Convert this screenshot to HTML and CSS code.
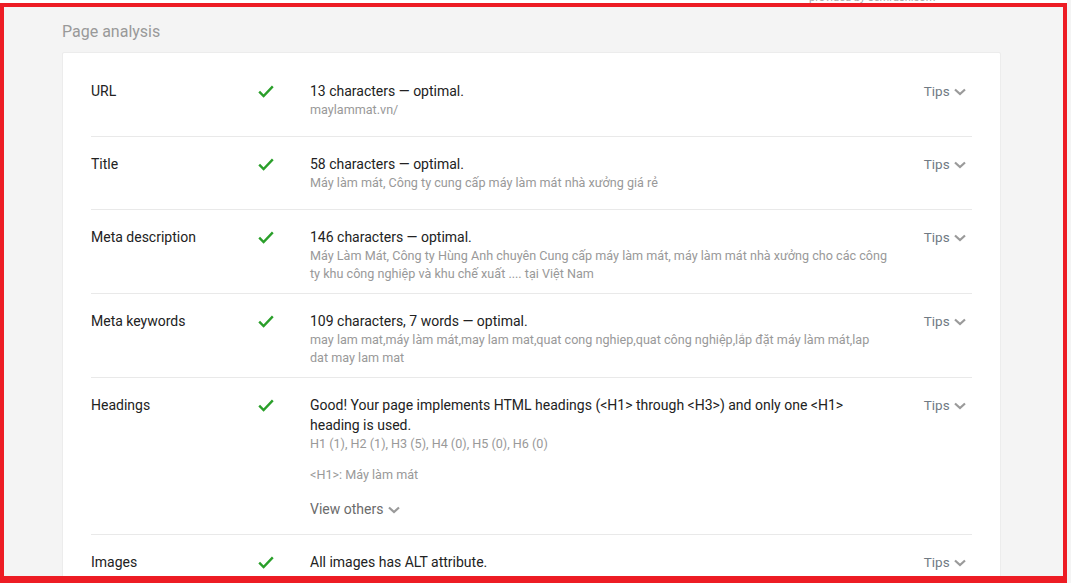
FILE: index.html
```html
<!DOCTYPE html>
<html lang="en">
<head>
<meta charset="utf-8">
<title>Page analysis</title>
<link rel="stylesheet" href="styles.css">
</head>
<body>
<div class="topstrip"><span class="provided">provided by semrush.com</span></div>
<div class="frame">
  <h2 class="section-title">Page analysis</h2>
  <div class="card">
    <div class="row">
      <div class="label">URL</div>
      <div class="check"><svg width="16" height="13" viewBox="0 0 16 13"><path d="M1.2 6.6 L5.6 11 L14.8 1.4" fill="none" stroke="#2a9f2a" stroke-width="2.4"/></svg></div>
      <div class="content">
        <div class="main">13 characters — optimal.</div>
        <div class="sub">maylammat.vn/</div>
      </div>
      <div class="tips">Tips <svg class="chev" width="12" height="8" viewBox="0 0 12 8"><path d="M1 1.5 L6 6 L11 1.5" fill="none" stroke="#9a9a9a" stroke-width="2.2"/></svg></div>
    </div>
    <div class="row">
      <div class="label">Title</div>
      <div class="check"><svg width="16" height="13" viewBox="0 0 16 13"><path d="M1.2 6.6 L5.6 11 L14.8 1.4" fill="none" stroke="#2a9f2a" stroke-width="2.4"/></svg></div>
      <div class="content">
        <div class="main">58 characters — optimal.</div>
        <div class="sub">Máy làm mát, Công ty cung cấp máy làm mát nhà xưởng giá rẻ</div>
      </div>
      <div class="tips">Tips <svg class="chev" width="12" height="8" viewBox="0 0 12 8"><path d="M1 1.5 L6 6 L11 1.5" fill="none" stroke="#9a9a9a" stroke-width="2.2"/></svg></div>
    </div>
    <div class="row">
      <div class="label">Meta description</div>
      <div class="check"><svg width="16" height="13" viewBox="0 0 16 13"><path d="M1.2 6.6 L5.6 11 L14.8 1.4" fill="none" stroke="#2a9f2a" stroke-width="2.4"/></svg></div>
      <div class="content">
        <div class="main">146 characters — optimal.</div>
        <div class="sub">Máy Làm Mát, Công ty Hùng Anh chuyên Cung cấp máy làm mát, máy làm mát nhà xưởng cho các công ty khu công nghiệp và khu chế xuất .... tại Việt Nam</div>
      </div>
      <div class="tips">Tips <svg class="chev" width="12" height="8" viewBox="0 0 12 8"><path d="M1 1.5 L6 6 L11 1.5" fill="none" stroke="#9a9a9a" stroke-width="2.2"/></svg></div>
    </div>
    <div class="row">
      <div class="label">Meta keywords</div>
      <div class="check"><svg width="16" height="13" viewBox="0 0 16 13"><path d="M1.2 6.6 L5.6 11 L14.8 1.4" fill="none" stroke="#2a9f2a" stroke-width="2.4"/></svg></div>
      <div class="content">
        <div class="main">109 characters, 7 words — optimal.</div>
        <div class="sub">may lam mat,máy làm mát,may lam mat,quat cong nghiep,quat công nghiệp,lắp đặt máy làm mát,lap dat may lam mat</div>
      </div>
      <div class="tips">Tips <svg class="chev" width="12" height="8" viewBox="0 0 12 8"><path d="M1 1.5 L6 6 L11 1.5" fill="none" stroke="#9a9a9a" stroke-width="2.2"/></svg></div>
    </div>
    <div class="row">
      <div class="label">Headings</div>
      <div class="check"><svg width="16" height="13" viewBox="0 0 16 13"><path d="M1.2 6.6 L5.6 11 L14.8 1.4" fill="none" stroke="#2a9f2a" stroke-width="2.4"/></svg></div>
      <div class="content">
        <div class="main">Good! Your page implements HTML headings (&lt;H1&gt; through &lt;H3&gt;) and only one &lt;H1&gt; heading is used.</div>
        <div class="sub">H1 (1), H2 (1), H3 (5), H4 (0), H5 (0), H6 (0)</div>
        <div class="sub h1line">&lt;H1&gt;: Máy làm mát</div>
        <div class="more">View others <svg class="chev" width="12" height="8" viewBox="0 0 12 8"><path d="M1 1.5 L6 6 L11 1.5" fill="none" stroke="#9a9a9a" stroke-width="2.2"/></svg></div>
      </div>
      <div class="tips">Tips <svg class="chev" width="12" height="8" viewBox="0 0 12 8"><path d="M1 1.5 L6 6 L11 1.5" fill="none" stroke="#9a9a9a" stroke-width="2.2"/></svg></div>
    </div>
    <div class="row last">
      <div class="label">Images</div>
      <div class="check"><svg width="16" height="13" viewBox="0 0 16 13"><path d="M1.2 6.6 L5.6 11 L14.8 1.4" fill="none" stroke="#2a9f2a" stroke-width="2.4"/></svg></div>
      <div class="content">
        <div class="main">All images has ALT attribute.</div>
      </div>
      <div class="tips">Tips <svg class="chev" width="12" height="8" viewBox="0 0 12 8"><path d="M1 1.5 L6 6 L11 1.5" fill="none" stroke="#9a9a9a" stroke-width="2.2"/></svg></div>
    </div>
  </div>
</div>
</body>
</html>
```

FILE: styles.css
```css
* { box-sizing: border-box; }
html, body {
  margin: 0;
  padding: 0;
  background: #f4f4f4;
  font-family: Roboto, "Liberation Sans", Arial, sans-serif;
  color: #222;
}
.topstrip {
  height: 3px;
  overflow: hidden;
  background: #fff;
  width: 1067px;
  position: relative;
}
.provided {
  position: absolute;
  left: 809px;
  top: -8px;
  font-size: 11px;
  line-height: 11px;
  color: #aaa;
}
.frame {
  width: 1067px;
  height: 580px;
  border: 4px solid #ed1c24;
  border-bottom-width: 7px;
  overflow: hidden;
  padding: 0 0 0 58px;
}
.section-title {
  margin: 0;
  padding-top: 15px;
  height: 45px;
  font-size: 16px;
  line-height: 20px;
  font-weight: 400;
  color: #999;
}
.card {
  width: 939px;
  background: #fff;
  border: 1px solid #ececec;
  border-radius: 2px;
  padding: 11px 28px 0 28px;
}
.row {
  display: grid;
  grid-template-columns: 167px 52px 578px 1fr;
  border-bottom: 1px solid #e9e9e9;
  padding: 17px 0 10px;
  min-height: 73px;
}
.label {
  font-size: 14px;
  line-height: 20px;
  color: #222;
}
.check {
  height: 20px;
  display: flex;
  align-items: center;
}
.main {
  font-size: 14px;
  line-height: 20px;
  color: #222;
}
.sub {
  font-size: 12.6px;
  line-height: 18px;
  color: #999;
}
.h1line {
  margin-top: 13px;
}
.more {
  margin-top: 16px;
  font-size: 14px;
  line-height: 18px;
  color: #6b6b6b;
  padding-bottom: 6px;
}
.tips {
  text-align: right;
  padding-right: 6px;
  font-size: 13.5px;
  line-height: 20px;
  color: #707a84;
  white-space: nowrap;
}
.chev {
  vertical-align: middle;
  margin-left: 1px;
}
```
